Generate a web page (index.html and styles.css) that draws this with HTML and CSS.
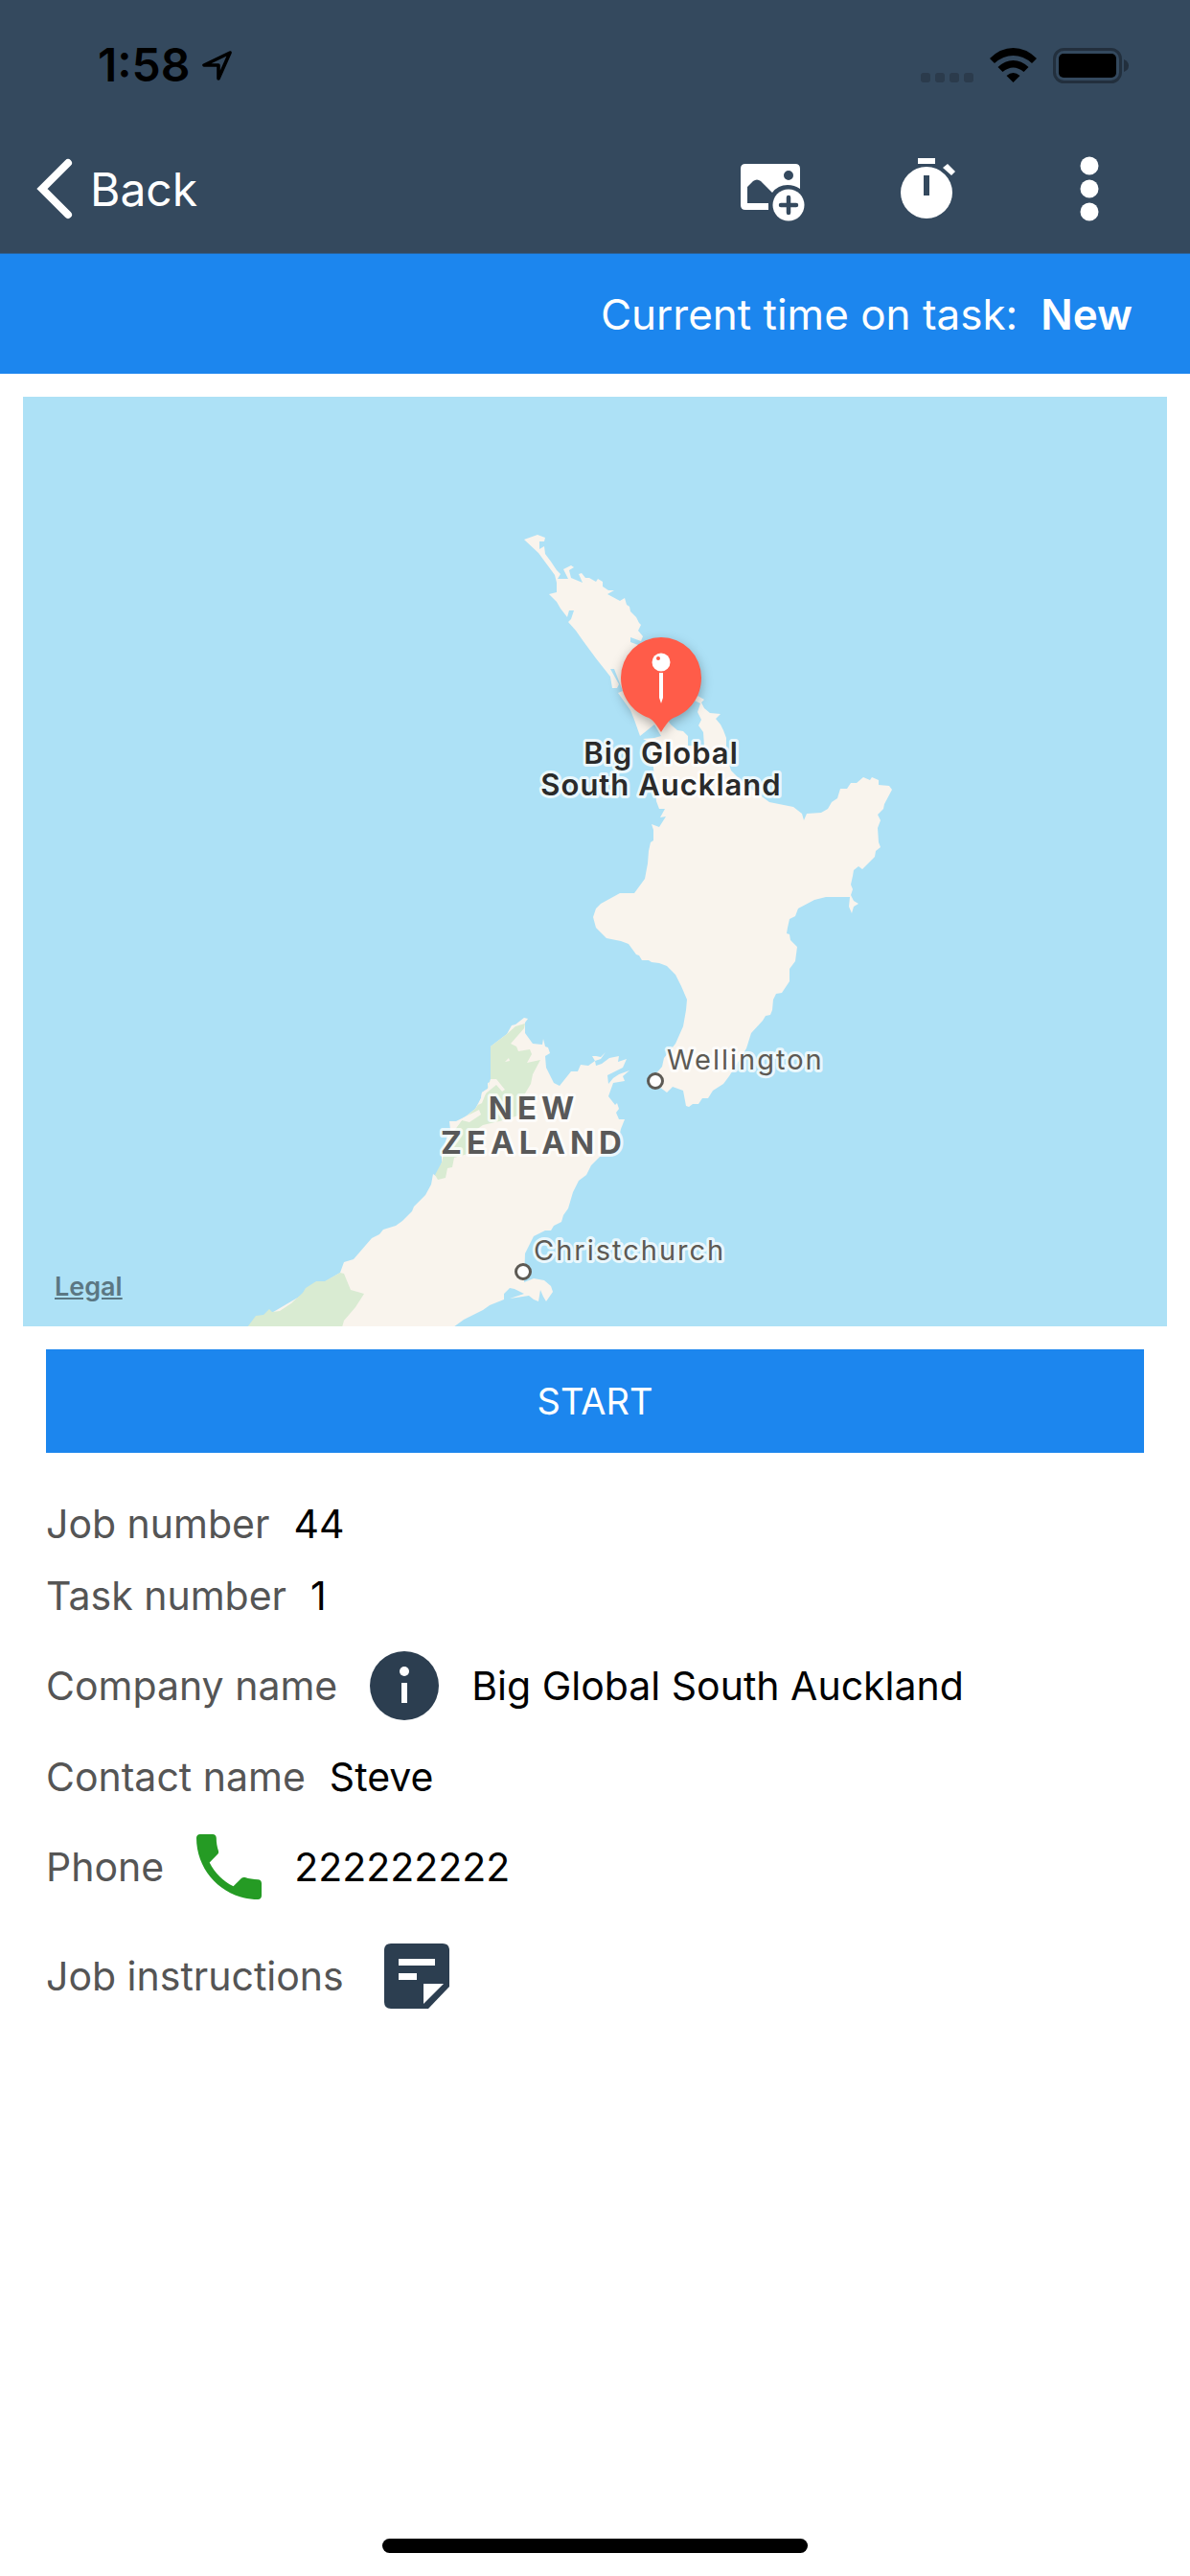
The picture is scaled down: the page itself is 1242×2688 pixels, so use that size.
FILE: index.html
```html
<!DOCTYPE html>
<html lang="en">
<head>
    <meta charset="UTF-8">
    <meta name="viewport" content="width=device-width, initial-scale=1.0">
    <title>Task details</title>
    <link rel="stylesheet" href="styles.css">
</head>
<body>
    <header>
        <!-- Status bar -->
        <div class="status-bar">
            <div class="status-time">
                <span>1:58</span>
                <svg class="location-icon" viewBox="0 0 32 32" aria-hidden="true">
                    <path d="M29 3 L2 16 H17 V30 Z" fill="none" stroke="#000" stroke-width="3.6" stroke-linejoin="round"/>
                </svg>
            </div>
            <div class="status-icons">
                <svg class="signal-icon" viewBox="0 0 55 37" aria-hidden="true">
                    <g fill="#2b3b4c">
                        <rect x="0" y="26" width="10" height="10" rx="3"/>
                        <rect x="15" y="26" width="10" height="10" rx="3"/>
                        <rect x="30" y="26" width="10" height="10" rx="3"/>
                        <rect x="45" y="26" width="10" height="10" rx="3"/>
                    </g>
                </svg>
                <svg class="wifi-icon" viewBox="0 0 49 37" aria-hidden="true">
                    <path d="M0 11 Q11 0 24.500 0 Q38 0 49 11 L44 16 Q35 8 24.500 8 Q14 8 5 16 Z"/>
                    <path d="M8.500 20 Q16 13 24.500 13 Q33 13 40.500 20 L35.500 25 Q30 20.500 24.500 20.500 Q19 20.500 13.500 25 Z"/>
                    <path d="M17.500 29 Q24.500 23 31.500 29 L24.500 36 Z"/>
                </svg>
                <svg class="battery-icon" viewBox="0 0 79 37" aria-hidden="true">
                    <rect x="1.500" y="1.500" width="69" height="34" rx="10" fill="none" stroke="#222f3d" stroke-width="3"/>
                    <rect x="6" y="6" width="60" height="25" rx="5"/>
                    <path d="M74 12 Q79 14 79 18.500 Q79 23 74 25 Z" fill="#222f3d"/>
                </svg>
            </div>
        </div>

        <!-- Navbar -->
        <nav>
            <a href="#" class="back-link">
                <svg class="back-icon" viewBox="0 0 38 64" aria-hidden="true">
                    <path d="M33 5 L6 32 L33 59" fill="none" stroke="#fff" stroke-width="8" stroke-linecap="round"/>
                </svg>
                Back
            </a>
            <div class="nav-actions">
                <button type="button" aria-label="Add photo">
                    <svg class="photo-icon" viewBox="0 0 68 60" aria-hidden="true">
                        <path fill="#fff" fill-rule="evenodd" d="M5 0 H57 Q62 0 62 5 V26 Q56 22 49 22 Q39 22 33 30 L21 18 Q17 15 13 18 L7 24 V41 H29 V48 H5 Q0 48 0 43 V5 Q0 0 5 0 Z M50 7 A5 5 0 1 0 50 17 A5 5 0 1 0 50 7 Z"/>
                        <circle cx="50" cy="43" r="16.500" fill="#fff"/>
                        <path d="M50 35 V51 M42 43 H58" stroke="#34495e" stroke-width="4.500" stroke-linecap="round"/>
                    </svg>
                </button>
                <button type="button" aria-label="Timer">
                    <svg class="timer-icon" viewBox="0 0 57 64" aria-hidden="true">
                        <rect x="18" y="0" width="18" height="6" fill="#fff"/>
                        <path d="M49 6 L57 14 L53 18 L44 10 Z" fill="#fff"/>
                        <circle cx="27" cy="36" r="27" fill="#fff"/>
                        <rect x="24" y="18" width="6" height="21" fill="#34495e"/>
                    </svg>
                </button>
                <button type="button" aria-label="More options">
                    <svg class="more-icon" viewBox="0 0 20 68" aria-hidden="true">
                        <g fill="#fff">
                            <circle cx="10" cy="10" r="9.500"/>
                            <circle cx="10" cy="34" r="9.500"/>
                            <circle cx="10" cy="58" r="9.500"/>
                        </g>
                    </svg>
                </button>
            </div>
        </nav>
    </header>

    <div class="time-banner">
        <span>Current time on task:</span>
        <strong>New</strong>
    </div>

    <main>
        <!-- Map -->
        <div class="map">
            <svg viewBox="24 413 1194 970" preserveAspectRatio="xMidYMid slice" role="img" aria-label="Map of New Zealand">
                <!-- North Island -->
                <path class="land" d="M547 562 L561 557 569 560 568 564 563 564 563 572 568 569 569 577 575 585 581 594 585 598 582 603 593 603 588 593 596 589 599 591 594 594 596 602 608 607 604 598 607 597 611 602 615 602 622 606 624 603 629 606 629 611 635 615 641 615 634 619 647 626 652 623 654 630 657 632 658 637 664 643 667 649 669 651 666 657 671 663 669 668 658 664 658 669 666 672 680 690 690 740 700 755 707 761 713 762 718 767 718 777 735 778 734 763 729 756 732 750 728 742 731 733 725 730 728 725 735 729 732 732 735 738 741 743 752 744 747 749 752 755 755 761 758 769 758 787 763 803 777 817 803 836 828 841 837 848 839 855 842 848 857 847 864 843 868 836 874 832 877 822 884 822 888 816 894 816 901 810 908 813 910 810 917 813 917 818 928 819 931 823 923 838 922 843 916 849 919 855 916 863 917 878 919 883 914 887 913 893 900 906 896 903 891 907 890 913 888 922 890 927 888 933 891 939 896 942 891 945 889 952 886 945 887 935 862 935 850 938 833 947 830 955 824 958 822 967 821 973 824 974 825 980 832 987 830 1002 824 1010 824 1023 816 1035 810 1036 807 1042 806 1053 804 1058 799 1059 796 1064 784 1077 779 1093 761 1122 755 1130 744 1137 739 1145 733 1145 729 1151 723 1151 719 1154 716 1153 713 1137 702 1133 696 1139 684 1130 684 1120 691 1112 693 1103 705 1088 713 1070 716 1053 717 1042 711 1028 705 1016 696 1007 688 1004 680 1003 677 1001 670 1001 667 996 664 995 656 984 648 981 633 978 622 967 619 956 622 947 627 942 647 931 662 931 673 916 676 900 677 887 679 878 682 876 682 865 680 859 688 862 695 851 689 852 694 843 688 843 685 835 682 800 677 773 671 770 683 769 690 767 683 755 668 767 662 750 658 740 645 722 650 720 641 697 637 697 646 713 644 717 639 717 637 705 622 686 608 667 601 657 593 648 596 645 599 636 594 636 592 643 585 634 581 627 573 619 581 617 581 607 579 599 562 576 Z"/>
                <!-- South Island -->
                <path class="land" d="M547 1061 L551 1062 548 1066 548 1077 556 1088 566 1089 567 1083 569 1091 572 1092 574 1098 569 1101 570 1113 578 1129 584 1132 596 1117 603 1117 606 1110 614 1111 621 1106 618 1101 622 1101 627 1102 632 1097 627 1104 621 1106 622 1111 628 1109 636 1103 646 1101 645 1107 654 1104 650 1113 640 1118 634 1121 635 1130 640 1124 646 1120 657 1116 650 1122 652 1127 640 1129 635 1143 642 1152 644 1150 646 1156 643 1160 646 1167 652 1167 648 1177 645 1190 628 1204 617 1215 612 1225 604 1231 598 1243 593 1260 588 1267 586 1274 578 1278 575 1283 569 1283 557 1289 548 1307 547 1337 557 1333 568 1335 575 1341 577 1347 570 1357 567 1352 564 1345 562 1357 557 1355 552 1351 532 1354 547 1349 537 1344 532 1343 526 1349 526 1355 511 1361 504 1366 484 1376 473 1384 258 1384 355 1327 359 1316 369 1313 388 1291 396 1287 400 1282 413 1278 420 1273 430 1263 432 1258 444 1246 450 1235 452 1224 456 1227 461 1212 461 1205 466 1187 470 1178 469 1169 478 1169 486 1164 496 1156 502 1145 503 1139 509 1135 509 1129 512 1128 512 1091 529 1078 534 1069 538 1068 Z"/>
                <!-- Parks -->
                <path class="park" d="M548 1067 L547 1072 533 1088 539 1091 541 1096 553 1094 555 1099 550 1108 564 1105 556 1120 554 1130 548 1140 541 1163 521 1169 504 1173 494 1180 488 1203 474 1207 472 1217 467 1218 465 1228 457 1230 454 1225 461 1212 466 1190 482 1168 496 1156 507 1140 512 1125 512 1091 529 1078 538 1070 Z"/>
                <path class="park" d="M258 1384 L267 1372 275 1371 281 1365 284 1368 292 1367 304 1359 316 1348 319 1343 330 1336 339 1336 355 1327 359 1328 366 1345 380 1349 371 1363 359 1377 357 1384 Z"/>
                <path class="land" d="M512 1125 L518 1125 527 1136 524 1138 518 1131 507 1140 503 1150 499 1152 502 1145 503 1139 509 1135 Z"/>
                <path class="land" d="M470 1172 L486 1164 500 1157 502 1162 490 1170 482 1168 471 1182 Z"/>
                <path class="land" d="M527 1107 L531 1103 532 1106 Z"/>

                <!-- Cities -->
                <g class="city">
                    <circle cx="684" cy="1127" r="7.500"/>
                    <text x="696" y="1115">Wellington</text>
                    <circle cx="546" cy="1326" r="7.500"/>
                    <text x="557" y="1314">Christchurch</text>
                </g>
                <g class="country">
                    <text x="557" y="1167">NEW</text>
                    <text x="557" y="1203">ZEALAND</text>
                </g>

                <!-- Marker -->
                <g class="marker">
                    <path class="marker-pin" d="M690 664 A42 42 0 0 1 732 706 C732 726 720 742 703 748 C697 751 694 757 690 763 C686 757 683 751 677 748 C660 742 648 726 648 706 A42 42 0 0 1 690 664 Z"/>
                    <circle cx="690" cy="690" r="9.500" fill="#fff"/>
                    <circle cx="687" cy="686" r="2" fill="#ff5c49"/>
                    <path d="M688 701 H692 V727 L690 733 L688 727 Z" fill="#fff"/>
                    <text x="690" y="796">Big Global</text>
                    <text x="690" y="829">South Auckland</text>
                </g>
            </svg>
            <a href="#" class="legal">Legal</a>
        </div>

        <button type="button" class="start-btn">START</button>

        <!-- Job details -->
        <dl class="details">
            <div class="row">
                <dt>Job number</dt>
                <dd>44</dd>
            </div>
            <div class="row">
                <dt>Task number</dt>
                <dd>1</dd>
            </div>
            <div class="row row-icon">
                <dt>Company name</dt>
                <dd>
                    <button type="button" aria-label="Company info">
                        <svg class="info-icon" viewBox="0 0 72 72" aria-hidden="true">
                            <circle cx="36" cy="36" r="36" fill="#2c3e50"/>
                            <circle cx="36" cy="21" r="5" fill="#fff"/>
                            <rect x="33" y="33" width="6" height="21" fill="#fff"/>
                        </svg>
                    </button>
                    Big Global South Auckland
                </dd>
            </div>
            <div class="row">
                <dt>Contact name</dt>
                <dd>Steve</dd>
            </div>
            <div class="row row-icon">
                <dt>Phone</dt>
                <dd>
                    <button type="button" aria-label="Call">
                        <svg class="phone-icon" viewBox="3 3 18 18" aria-hidden="true">
                            <path fill="#259b24" d="M6.620 10.790c1.440 2.830 3.760 5.140 6.590 6.590l2.200-2.200c.27-.27.67-.36 1.020-.24 1.120.37 2.330.57 3.570.57.55 0 1 .45 1 1V20c0 .55-.45 1-1 1-9.390 0-17-7.610-17-17 0-.55.45-1 1-1h3.500c.55 0 1 .45 1 1 0 1.250.2 2.450.57 3.570.11.35.03.74-.25 1.020l-2.200 2.200z"/>
                        </svg>
                    </button>
                    222222222
                </dd>
            </div>
            <div class="row row-icon">
                <dt>Job instructions</dt>
                <dd>
                    <button type="button" aria-label="Open job instructions">
                        <svg class="note-icon" viewBox="0 0 68 68" aria-hidden="true">
                            <path fill="#2c3e50" d="M7 0 H61 Q68 0 68 7 V45 L46 68 H7 Q0 68 0 61 V7 Q0 0 7 0 Z"/>
                            <path fill="#fff" d="M15 16 H53 V23 H15 Z M15 31 H34 V38 H15 Z M41 42 H62 L41 63 Z"/>
                        </svg>
                    </button>
                </dd>
            </div>
        </dl>
    </main>

    <div class="home-indicator"></div>
</body>
</html>
```

FILE: styles.css
```css
* {
    box-sizing: border-box;
}
body {
    margin: 0;
    min-height: 100vh;
    display: flex;
    flex-direction: column;
    font-family: Inter, 'Liberation Sans', sans-serif;
    font-size: 41px;
    background-color: #fff;
    color: #000;
}
svg {
    display: block;
    flex-shrink: 0;
}
button {
    padding: 0;
    border: none;
    background: none;
    font-family: inherit;
    cursor: pointer;
}

/* Header */
header {
    background-color: #34495e;
    border-bottom: 1px solid #2a6299;
}
.status-bar {
    display: flex;
    justify-content: space-between;
    align-items: center;
    padding: 44px 64px 40px 102px;
    line-height: 48px;
}
.status-time {
    display: flex;
    align-items: center;
    gap: 12px;
    font-size: 48px;
    font-weight: 600;
}
.location-icon {
    width: 32px;
    height: 32px;
}
.status-icons {
    display: flex;
    align-items: center;
    gap: 17px;
}
.signal-icon {
    width: 55px;
    height: 37px;
}
.wifi-icon {
    width: 49px;
    height: 37px;
}
.battery-icon {
    width: 79px;
    height: 37px;
}
nav {
    display: flex;
    justify-content: space-between;
    align-items: center;
    height: 132px;
    padding: 0 95px 2px 38px;
}
.back-link {
    display: flex;
    align-items: center;
    gap: 18px;
    font-size: 48px;
    color: #fff;
    text-decoration: none;
}
.back-icon {
    width: 38px;
    height: 64px;
}
.nav-actions {
    display: flex;
    align-items: center;
}
.photo-icon {
    width: 68px;
    height: 60px;
    margin-top: 8px;
}
.timer-icon {
    width: 57px;
    height: 64px;
    margin-left: 99px;
}
.more-icon {
    width: 20px;
    height: 68px;
    margin-left: 130px;
}

/* Time banner */
.time-banner {
    display: flex;
    justify-content: flex-end;
    align-items: center;
    gap: 24px;
    height: 125px;
    padding: 0 60px;
    background-color: #1c86ee;
    color: #fff;
    font-size: 44px;
}
.time-banner strong {
    font-weight: 600;
}

/* Map */
main {
    flex: 1;
    padding: 24px 24px 0;
}
.map {
    position: relative;
    background-color: #ade1f6;
}
.map svg {
    width: 100%;
    height: auto;
}
.land {
    fill: #f9f4ed;
}
.park {
    fill: #d9ebd2;
}
.map text {
    paint-order: stroke;
    stroke: rgba(255, 255, 255, 0.75);
    stroke-width: 6px;
    stroke-linejoin: round;
}
.city text {
    font-size: 29px;
    letter-spacing: 2px;
    fill: #5d5a54;
}
.city circle {
    fill: #fff;
    stroke: #5d5a54;
    stroke-width: 3px;
}
.country text {
    font-size: 33px;
    font-weight: 700;
    letter-spacing: 5px;
    text-anchor: middle;
    fill: #595959;
}
.marker text {
    font-size: 31px;
    font-weight: 600;
    letter-spacing: 1px;
    text-anchor: middle;
    fill: #2a2a2a;
}
.marker-pin {
    fill: #ff5c49;
    filter: drop-shadow(0 4px 6px rgba(0, 0, 0, 0.3));
}
.legal {
    position: absolute;
    left: 33px;
    bottom: 25px;
    font-size: 27px;
    font-weight: 600;
    color: #5b7783;
}

/* Start button */
.start-btn {
    display: block;
    width: calc(100% - 48px);
    height: 108px;
    margin: 24px 24px 36px;
    background-color: #1c86ee;
    color: #fff;
    font-size: 38px;
}

/* Job details */
.details {
    margin: 0 24px;
}
.row {
    display: flex;
    align-items: center;
    gap: 25px;
    min-height: 75px;
}
.row-icon {
    gap: 34px;
    min-height: 114px;
}
dt {
    color: #555;
}
dd {
    display: flex;
    align-items: center;
    gap: 34px;
    margin: 0;
}
.info-icon {
    width: 72px;
    height: 72px;
}
.phone-icon {
    width: 68px;
    height: 68px;
}
.note-icon {
    width: 68px;
    height: 68px;
    margin-left: 8px;
}

.home-indicator {
    width: 444px;
    height: 15px;
    margin: 0 auto 24px;
    border-radius: 8px;
    background-color: #000;
}
```
